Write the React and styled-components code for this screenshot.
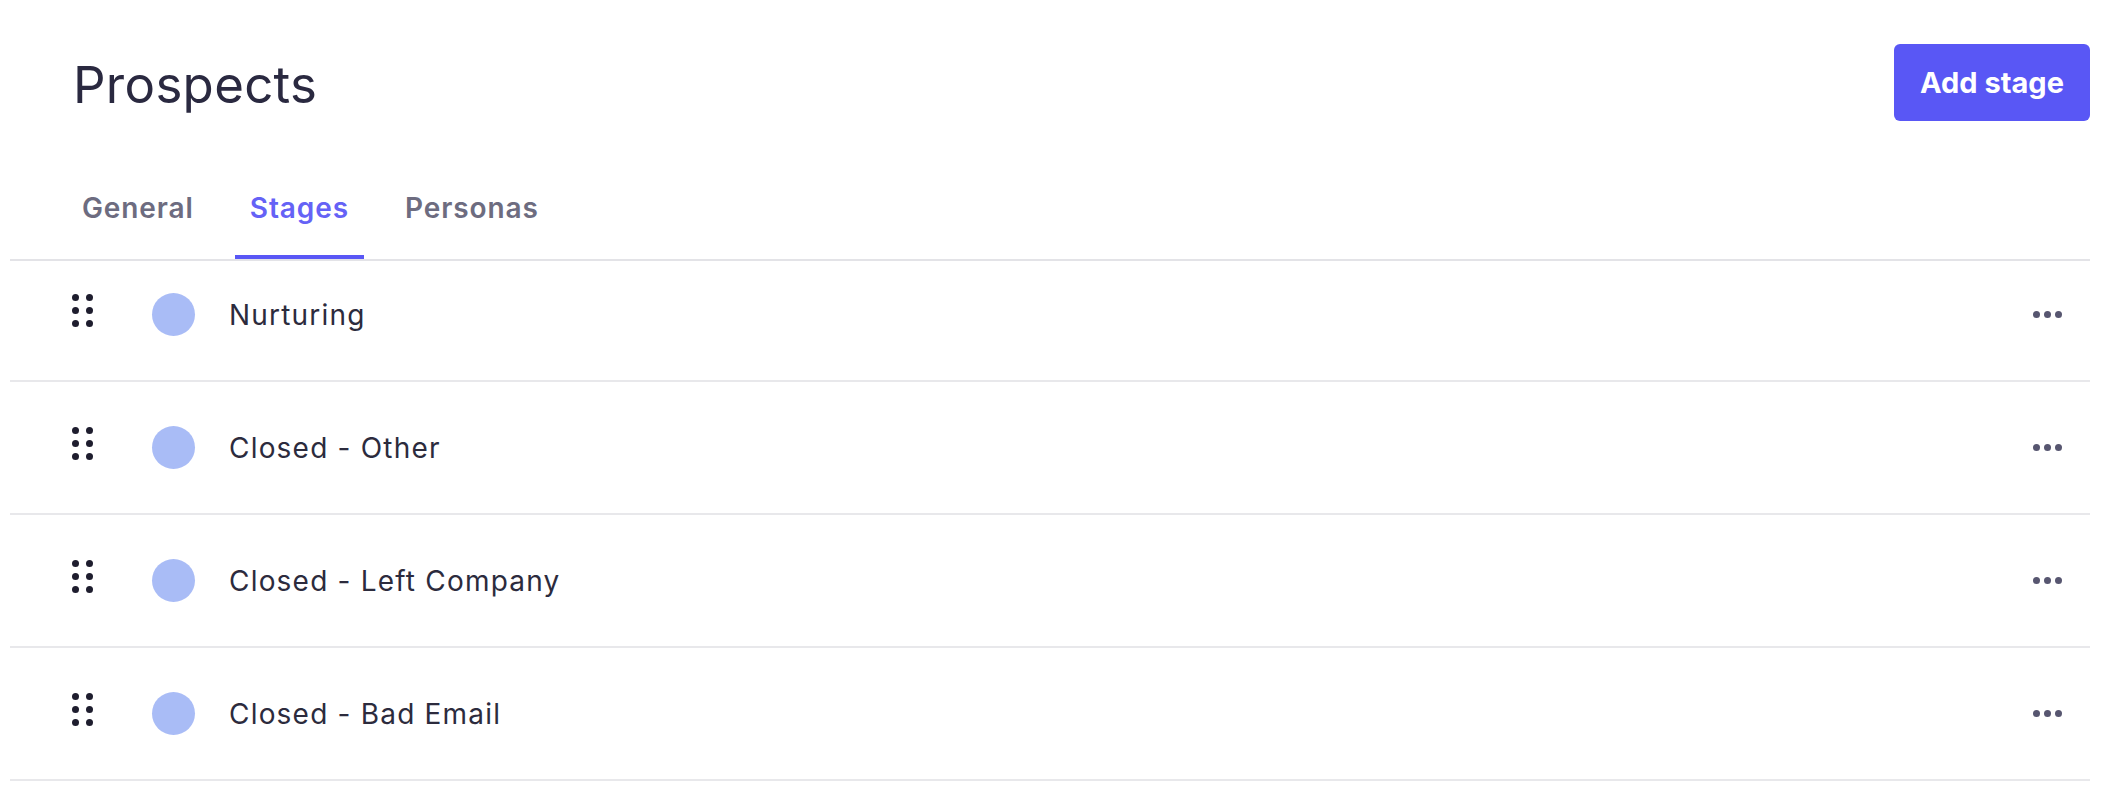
import { useState } from "react";
import styled, { createGlobalStyle } from "styled-components";

const GlobalStyle = createGlobalStyle`
  * {
    box-sizing: border-box;
  }

  body {
    margin: 0;
    background: #fff;
    font-family: Inter, "Noto Sans", sans-serif;
    color: #2a2940;
  }
`

const Page = styled.div`
  padding: 0 16px 0 10px;
`

const Header = styled.header`
  display: flex;
  align-items: center;
  justify-content: space-between;
  padding: 44px 0 0 63px;
`

const Title = styled.h1`
  margin: 0;
  font-size: 51px;
  font-weight: 400;
  line-height: 62px;
  letter-spacing: 0.3px;
  color: #2a2940;
  transform: translateY(2px);
`

const AddButton = styled.button`
  width: 196px;
  height: 77px;
  border: none;
  border-radius: 6px;
  background-color: #5957f5;
  color: #fff;
  font-family: Inter, "Noto Sans", sans-serif;
  font-size: 29px;
  font-weight: 700;
  cursor: pointer;
`

const Tabs = styled.nav`
  display: flex;
  gap: 26px;
  margin-top: 70px;
  padding-left: 57px;
  border-bottom: 2px solid #e3e3e7;
`

const Tab = styled.button`
  padding: 0 15px 30px;
  border: none;
  border-bottom: 4px solid ${props => (props.$active ? "#5957f5" : "transparent")};
  background: transparent;
  font-family: Inter, "Noto Sans", sans-serif;
  font-size: 28px;
  line-height: 34px;
  font-weight: 600;
  letter-spacing: 0.9px;
  color: ${props => (props.$active ? "#6562f6" : "#6d6c80")};
  cursor: pointer;
`

const List = styled.ul`
  margin: 0;
  padding: 0;
  list-style: none;
`

const Row = styled.li`
  display: flex;
  align-items: center;
  height: 133px;
  padding: 0 28px 0 62px;
  border-bottom: 2px solid #e8e8eb;

  &:first-child {
    height: 121px;
    padding-bottom: 12px;
  }
`

const Handle = styled.span`
  display: grid;
  grid-template-columns: repeat(2, 7px);
  grid-auto-rows: 7px;
  gap: 6px 7px;
  margin-bottom: 9px;
  cursor: grab;

  & > i {
    border-radius: 50%;
    background-color: #1e1d2e;
  }
`

const Swatch = styled.span`
  width: 43px;
  height: 43px;
  margin-left: 59px;
  border-radius: 50%;
  background-color: ${props => props.$color};
  flex-shrink: 0;
`

const StageName = styled.span`
  flex-grow: 1;
  margin-left: 34px;
  font-size: 28px;
  letter-spacing: 1.2px;
  color: #2c2b3d;
`

const MoreButton = styled.button`
  display: flex;
  gap: 4px;
  padding: 0;
  border: none;
  background: transparent;
  cursor: pointer;

  & > i {
    width: 7px;
    height: 7px;
    border-radius: 50%;
    background-color: #575670;
  }
`

const stages = [
  { name: "Nurturing", color: "#a9bcf6" },
  { name: "Closed - Other", color: "#a9bcf6" },
  { name: "Closed - Left Company", color: "#a9bcf6" },
  { name: "Closed - Bad Email", color: "#a9bcf6" },
]

const tabs = ["General", "Stages", "Personas"]

export default function App() {
  const [activeTab, setActiveTab] = useState("Stages");

  return (
    <Page>
      <GlobalStyle />
      <Header>
        <Title>Prospects</Title>
        <AddButton>Add stage</AddButton>
      </Header>
      <Tabs>
        {tabs.map(tab => (
          <Tab key={tab} $active={tab === activeTab} onClick={() => setActiveTab(tab)}>
            {tab}
          </Tab>
        ))}
      </Tabs>
      <List>
        {stages.map(stage => (
          <Row key={stage.name}>
            <Handle>
              <i /><i /><i /><i /><i /><i />
            </Handle>
            <Swatch $color={stage.color} />
            <StageName>{stage.name}</StageName>
            <MoreButton aria-label="More">
              <i /><i /><i />
            </MoreButton>
          </Row>
        ))}
      </List>
    </Page>
  )
}
